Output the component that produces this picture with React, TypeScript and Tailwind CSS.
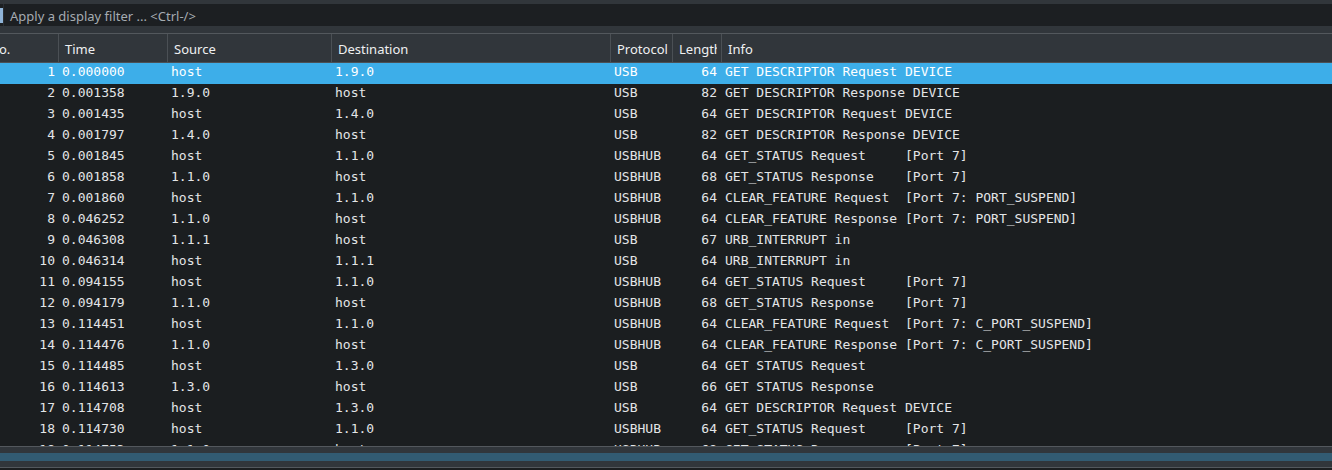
import React from 'react';

interface Packet {
  no: number;
  time: string;
  source: string;
  destination: string;
  protocol: string;
  length: number;
  info: string;
}

// captured USB packets, info text keeps its column padding
const packets: Packet[] = [
  { no: 1, time: '0.000000', source: 'host', destination: '1.9.0', protocol: 'USB', length: 64, info: 'GET DESCRIPTOR Request DEVICE' },
  { no: 2, time: '0.001358', source: '1.9.0', destination: 'host', protocol: 'USB', length: 82, info: 'GET DESCRIPTOR Response DEVICE' },
  { no: 3, time: '0.001435', source: 'host', destination: '1.4.0', protocol: 'USB', length: 64, info: 'GET DESCRIPTOR Request DEVICE' },
  { no: 4, time: '0.001797', source: '1.4.0', destination: 'host', protocol: 'USB', length: 82, info: 'GET DESCRIPTOR Response DEVICE' },
  { no: 5, time: '0.001845', source: 'host', destination: '1.1.0', protocol: 'USBHUB', length: 64, info: 'GET_STATUS Request     [Port 7]' },
  { no: 6, time: '0.001858', source: '1.1.0', destination: 'host', protocol: 'USBHUB', length: 68, info: 'GET_STATUS Response    [Port 7]' },
  { no: 7, time: '0.001860', source: 'host', destination: '1.1.0', protocol: 'USBHUB', length: 64, info: 'CLEAR_FEATURE Request  [Port 7: PORT_SUSPEND]' },
  { no: 8, time: '0.046252', source: '1.1.0', destination: 'host', protocol: 'USBHUB', length: 64, info: 'CLEAR_FEATURE Response [Port 7: PORT_SUSPEND]' },
  { no: 9, time: '0.046308', source: '1.1.1', destination: 'host', protocol: 'USB', length: 67, info: 'URB_INTERRUPT in' },
  { no: 10, time: '0.046314', source: 'host', destination: '1.1.1', protocol: 'USB', length: 64, info: 'URB_INTERRUPT in' },
  { no: 11, time: '0.094155', source: 'host', destination: '1.1.0', protocol: 'USBHUB', length: 64, info: 'GET_STATUS Request     [Port 7]' },
  { no: 12, time: '0.094179', source: '1.1.0', destination: 'host', protocol: 'USBHUB', length: 68, info: 'GET_STATUS Response    [Port 7]' },
  { no: 13, time: '0.114451', source: 'host', destination: '1.1.0', protocol: 'USBHUB', length: 64, info: 'CLEAR_FEATURE Request  [Port 7: C_PORT_SUSPEND]' },
  { no: 14, time: '0.114476', source: '1.1.0', destination: 'host', protocol: 'USBHUB', length: 64, info: 'CLEAR_FEATURE Response [Port 7: C_PORT_SUSPEND]' },
  { no: 15, time: '0.114485', source: 'host', destination: '1.3.0', protocol: 'USB', length: 64, info: 'GET STATUS Request' },
  { no: 16, time: '0.114613', source: '1.3.0', destination: 'host', protocol: 'USB', length: 66, info: 'GET STATUS Response' },
  { no: 17, time: '0.114708', source: 'host', destination: '1.3.0', protocol: 'USB', length: 64, info: 'GET DESCRIPTOR Request DEVICE' },
  { no: 18, time: '0.114730', source: 'host', destination: '1.1.0', protocol: 'USBHUB', length: 64, info: 'GET_STATUS Request     [Port 7]' },
  { no: 19, time: '0.114753', source: '1.1.0', destination: 'host', protocol: 'USBHUB', length: 68, info: 'GET_STATUS Response    [Port 7]' },
];

const headCell = 'shrink-0 h-full flex items-center pt-[4px] pl-[6px] border-r border-[#4b5055] overflow-hidden whitespace-nowrap';

const App: React.FC = () => {
  return (
    <div className="w-[1332px] h-[470px] bg-[#31363b] flex flex-col overflow-hidden">
      {/* top strip */}
      <div className="h-[4px] shrink-0" />

      {/* display filter */}
      <div className="h-[22px] shrink-0 bg-[#1c1f22] flex items-center">
        <div className="w-[3px] h-[15px] bg-[#8fb4d8]" />
        <div className="w-[1px] h-full bg-[#2a2e32]" />
        <span className="pl-[6px] pt-[3px] text-[13px] text-[#a5abb1] font-['Noto_Sans',sans-serif] whitespace-nowrap">
          Apply a display filter ... &lt;Ctrl-/&gt;
        </span>
      </div>

      <div className="h-[7px] shrink-0" />

      {/* packet list */}
      <div className="shrink-0 border-t border-[#53585d] overflow-hidden">
        <div className="-ml-[17px] w-[1349px]">
          <div className="h-[29px] flex bg-[#31363b] border-b border-[#4b5055] text-[13px] text-[#eff0f1] font-['Noto_Sans',sans-serif]">
            <div className={`${headCell} w-[76px]`}>No.</div>
            <div className={`${headCell} w-[109px]`}>Time</div>
            <div className={`${headCell} w-[164px]`}>Source</div>
            <div className={`${headCell} w-[279px]`}>Destination</div>
            <div className={`${headCell} w-[62px]`}>Protocol</div>
            <div className={`${headCell} w-[49px]`}>
              <div className="w-[38px] overflow-hidden">Length</div>
            </div>
            <div className="flex-1 h-full flex items-center pt-[4px] pl-[6px]">Info</div>
          </div>

          <div className="h-[383px] bg-[#1b1e20] overflow-hidden font-['DejaVu_Sans_Mono',monospace] text-[13px]">
            {packets.map((p) => (
              <div
                key={p.no}
                className={`h-[21px] flex leading-[18px] whitespace-pre ${
                  p.no === 1 ? 'bg-[#3daee9] text-white' : 'text-[#e3e5e7]'
                }`}
              >
                <div className="w-[76px] shrink-0 text-right pr-[4px]">{p.no}</div>
                <div className="w-[109px] shrink-0 pl-[3px]">{p.time}</div>
                <div className="w-[164px] shrink-0 pl-[3px]">{p.source}</div>
                <div className="w-[279px] shrink-0 pl-[3px]">{p.destination}</div>
                <div className="w-[62px] shrink-0 pl-[3px]">{p.protocol}</div>
                <div className="w-[49px] shrink-0 text-right pr-[5px]">{p.length}</div>
                <div className="flex-1 pl-[3px]">{p.info}</div>
              </div>
            ))}
          </div>
        </div>
      </div>

      {/* horizontal scrollbar */}
      <div className="shrink-0 border-t border-[#53585d] h-[21px] flex flex-col">
        <div className="h-[6px]" />
        <div className="h-[8px] bg-[#325b72]" />
        <div className="h-[6px]" />
      </div>
      <div className="shrink-0 h-[1px] bg-[#53585d]" />
      <div className="flex-1 bg-[#1b1e20]" />
    </div>
  );
};

export default App;
